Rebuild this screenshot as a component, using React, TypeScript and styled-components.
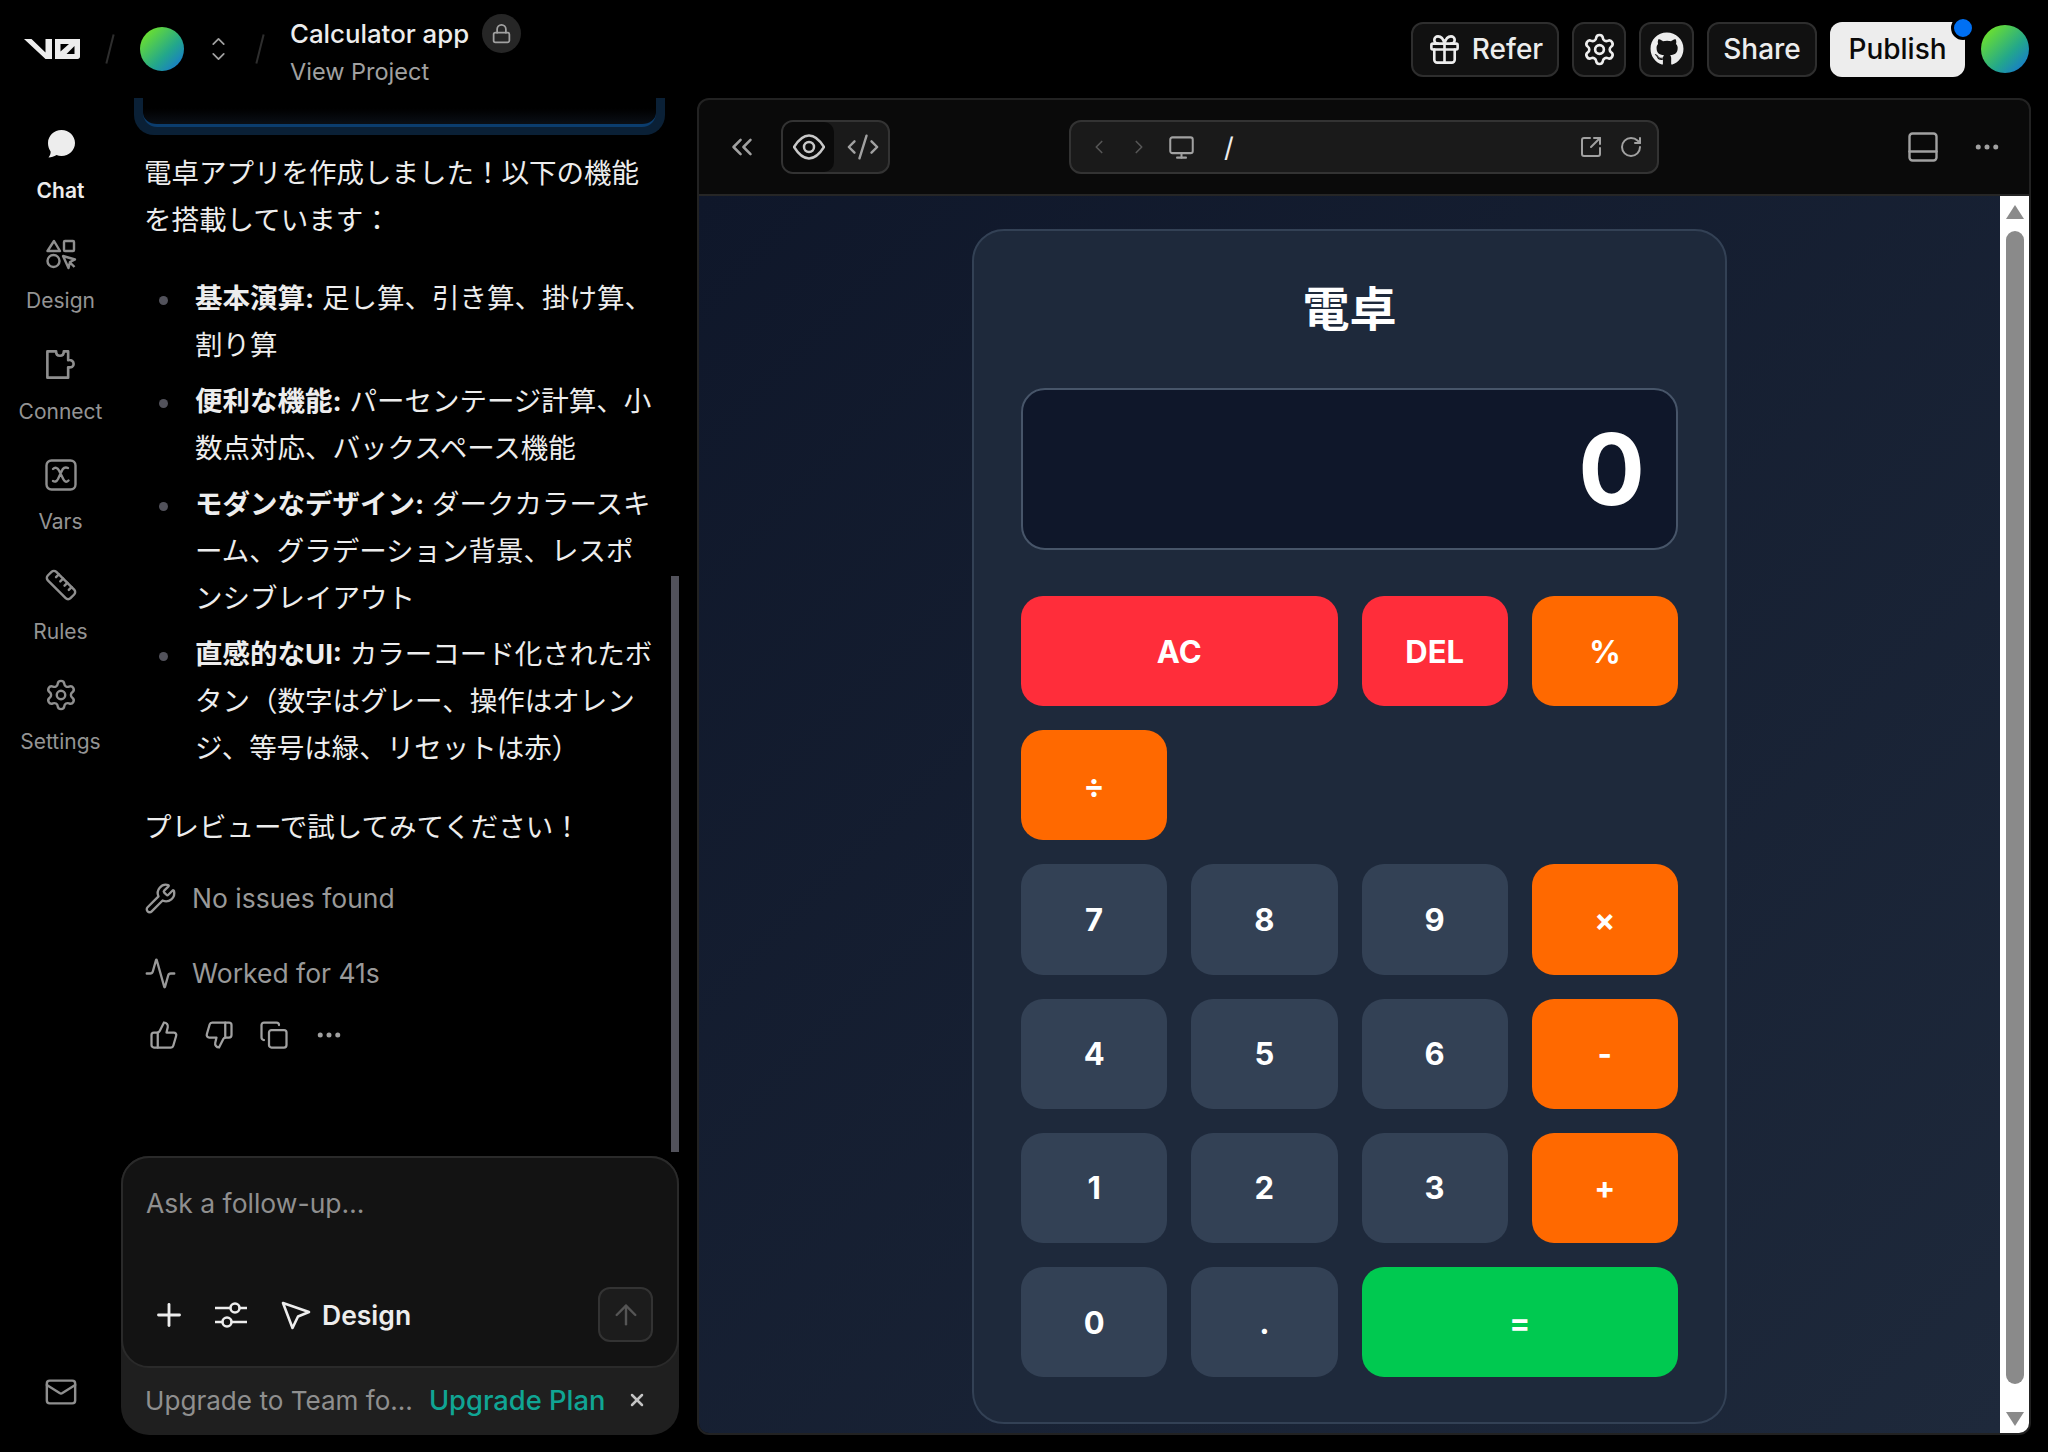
import React from 'react';
import styled, { createGlobalStyle } from 'styled-components';
import {
  Activity,
  ArrowUp,
  ChevronDown,
  ChevronLeft,
  ChevronRight,
  ChevronsLeft,
  ChevronUp,
  CodeXml,
  Copy,
  Ellipsis,
  Gift,
  Lock,
  Mail,
  Monitor,
  PanelBottom,
  Plus,
  RotateCw,
  Ruler,
  Settings,
  SquareArrowOutUpRight,
  ThumbsDown,
  ThumbsUp,
  Wrench,
  X,
} from 'lucide-react';
import { FaGithub } from 'react-icons/fa';

const SANS = `Inter, "Noto Sans CJK JP", sans-serif`;

const GlobalStyle = createGlobalStyle`
  html, body {
    margin: 0;
    padding: 0;
    background: #000;
  }
  * {
    box-sizing: border-box;
  }
`;

const Root = styled.div`
  width: 2048px;
  height: 1452px;
  display: flex;
  flex-direction: column;
  background: #000;
  color: #ededed;
  font-family: ${SANS};
  overflow: hidden;
`;

const Header = styled.header`
  height: 98px;
  flex: none;
  display: flex;
  align-items: center;
  padding: 0 19px 0 24px;
`;

const Slash = styled.span<{ $gap: number }>`
  width: 2px;
  height: 30px;
  margin: 0 ${(p) => p.$gap}px;
  background: #2e2e2e;
  transform: rotate(14deg);
`;

const Avatar = styled.div<{ $size: number }>`
  width: ${(p) => p.$size}px;
  height: ${(p) => p.$size}px;
  flex: none;
  border-radius: 50%;
  background: linear-gradient(135deg, #6fe32a 10%, #23a78b 60%, #1574d6 95%);
`;

const Switcher = styled.div`
  width: 20px;
  margin-left: 24px;
  display: flex;
  flex-direction: column;
  align-items: center;
  color: #a1a1a1;
  svg {
    margin: -3px 0;
  }
`;

const ProjectBlock = styled.div`
  display: flex;
  flex-direction: column;
  gap: 3px;
  margin-left: -2px;
  margin-top: 1px;
`;

const ProjectRow = styled.div`
  display: flex;
  align-items: center;
  gap: 13px;
  height: 40px;
`;

const ProjectName = styled.span`
  font-size: 25.8px;
  font-weight: 500;
  color: #ededed;
`;

const LockBadge = styled.span`
  width: 39px;
  height: 39px;
  border-radius: 50%;
  background: #262626;
  color: #a1a1a1;
  display: flex;
  align-items: center;
  justify-content: center;
`;

const ProjectLink = styled.span`
  font-size: 23.5px;
  color: #a1a1a1;
`;

const HeaderActions = styled.div`
  margin-left: auto;
  display: flex;
  align-items: center;
  gap: 13px;
`;

const HeaderButton = styled.button<{ $width: number }>`
  width: ${(p) => p.$width}px;
  height: 55px;
  display: flex;
  align-items: center;
  justify-content: center;
  gap: 10px;
  border-radius: 12px;
  border: 2px solid #2e2e2e;
  background: #111;
  color: #ededed;
  font: 500 28px ${SANS};
  padding: 0;
`;

const PublishButton = styled.button`
  position: relative;
  width: 135px;
  height: 55px;
  margin-right: 3px;
  border: 0;
  border-radius: 12px;
  background: #ededed;
  color: #0a0a0a;
  font: 500 28px ${SANS};
  padding: 0;
`;

const NotifyDot = styled.span`
  position: absolute;
  top: -6px;
  right: -10px;
  width: 24px;
  height: 24px;
  border-radius: 50%;
  background: #0070f3;
  border: 3px solid #000;
`;

const Body = styled.div`
  flex: 1;
  min-height: 0;
  display: flex;
  padding-bottom: 17px;
  padding-right: 17px;
`;

const Rail = styled.nav`
  width: 121px;
  flex: none;
  display: flex;
  flex-direction: column;
  align-items: center;
  padding-top: 27px;
`;

const RailItem = styled.div<{ $active?: boolean }>`
  height: 110.3px;
  width: 100%;
  display: flex;
  flex-direction: column;
  align-items: center;
  gap: 15px;
  font-size: 21px;
  font-weight: ${(p) => (p.$active ? 600 : 400)};
  color: ${(p) => (p.$active ? '#ededed' : '#949494')};
`;

const RailIcon = styled.span<{ $active?: boolean }>`
  height: 38px;
  display: flex;
  align-items: center;
  justify-content: center;
  color: ${(p) => (p.$active ? '#ededed' : '#8f8f8f')};
`;

const RailMail = styled.div`
  margin-top: auto;
  margin-bottom: 26px;
  color: #8f8f8f;
  display: flex;
`;

const ChatColumn = styled.section`
  width: 558px;
  flex: none;
  display: flex;
  flex-direction: column;
`;

const ChatScroll = styled.div`
  position: relative;
  flex: 1;
  min-height: 0;
  overflow: hidden;
  padding: 0 23px;
`;

const ChatScrollThumb = styled.span`
  position: absolute;
  right: 0;
  top: 478px;
  width: 8px;
  height: 576px;
  background: #52525b;
`;

const PrevCard = styled.div`
  height: 37px;
  margin: 0 -9px 0 -10px;
  padding: 0 9px 8px;
  border-radius: 0 0 20px 20px;
  background: #0a2036;
`;

const PrevCardInner = styled.div`
  height: 100%;
  border-radius: 0 0 14px 14px;
  border-bottom: 3px solid #0b3d6e;
  background: linear-gradient(#000 40%, #0a0f16);
`;

const Paragraph = styled.p<{ $top: number }>`
  margin: ${(p) => p.$top}px 0 0;
  font-size: 27.5px;
  line-height: 47px;
  color: #ededed;
`;

const FeatureList = styled.ul`
  list-style: none;
  margin: 31px 0 0;
  padding: 0 0 0 51px;
  display: flex;
  flex-direction: column;
  gap: 9px;
`;

const FeatureItem = styled.li`
  position: relative;
  font-size: 27.5px;
  line-height: 47px;
  color: #ededed;
  &::before {
    content: '';
    position: absolute;
    left: -36px;
    top: 21px;
    width: 9px;
    height: 9px;
    border-radius: 50%;
    background: #52525b;
  }
  b {
    font-weight: 700;
  }
`;

const StatusRow = styled.div<{ $top: number }>`
  display: flex;
  align-items: center;
  gap: 15px;
  margin-top: ${(p) => p.$top}px;
  height: 40px;
  color: #999;
  font-size: 26.5px;
`;

const ActionRow = styled.div`
  display: flex;
  align-items: center;
  gap: 25px;
  margin-top: 27px;
  padding-left: 5px;
  color: #a1a1a1;
`;

const InputDock = styled.div`
  flex: none;
  height: 279px;
  display: flex;
  flex-direction: column;
  background: #1f1f1f;
  border-radius: 28px;
`;

const InputBox = styled.div`
  height: 212px;
  flex: none;
  display: flex;
  flex-direction: column;
  background: #131313;
  border: 2px solid #2a2a2a;
  border-radius: 28px;
  padding: 27px 24px 24px 23px;
`;

const Placeholder = styled.div`
  font-size: 26.5px;
  line-height: 36px;
  color: #8f8f8f;
`;

const InputTools = styled.div`
  margin-top: auto;
  display: flex;
  align-items: center;
  color: #ededed;
  padding-left: 5px;
`;

const ToolSlot = styled.span<{ $left: number }>`
  display: flex;
  margin-left: ${(p) => p.$left}px;
`;

const DesignLabel = styled.span`
  font-size: 26.5px;
  font-weight: 600;
  margin-left: 11px;
`;

const SendButton = styled.button`
  margin-left: auto;
  width: 55px;
  height: 55px;
  border-radius: 12px;
  border: 2px solid #333;
  background: #1c1c1c;
  color: #555;
  padding: 0;
  display: flex;
  align-items: center;
  justify-content: center;
`;

const UpgradeBar = styled.div`
  flex: 1;
  display: flex;
  align-items: center;
  padding: 0 32px 3px 24px;
  font-size: 26.1px;
  color: #8f8f8f;
`;

const UpgradeLink = styled.span`
  margin-left: 16px;
  font-size: 27.3px;
  color: #10a594;
  font-weight: 500;
`;

const UpgradeClose = styled.span`
  margin-left: auto;
  display: flex;
  color: #c4c4c4;
`;

const Preview = styled.section`
  flex: 1;
  min-width: 0;
  margin-left: 18px;
  display: flex;
  flex-direction: column;
  border: 2px solid #222;
  border-radius: 12px;
  overflow: hidden;
  background: #0a0a0a;
`;

const Toolbar = styled.div`
  height: 96px;
  flex: none;
  display: flex;
  align-items: center;
  border-bottom: 2px solid #262626;
  padding: 0 27px 0 26px;
  color: #a1a1a1;
`;

const ViewToggle = styled.div`
  display: flex;
  margin-left: 22px;
  width: 109px;
  height: 54px;
  border: 2px solid #333;
  border-radius: 12px;
  background: #1a1a1a;
`;

const ViewTab = styled.span<{ $active?: boolean }>`
  flex: ${(p) => (p.$active ? '0 0 51px' : 1)};
  display: flex;
  align-items: center;
  justify-content: center;
  padding-left: ${(p) => (p.$active ? 0 : 3)}px;
  border-radius: 10px;
  background: ${(p) => (p.$active ? '#0a0a0a' : 'transparent')};
  color: ${(p) => (p.$active ? '#c8c8c8' : '#a1a1a1')};
`;

const AddressBar = styled.div`
  margin-left: 179px;
  width: 590px;
  height: 54px;
  display: flex;
  align-items: center;
  padding: 0 14px 0 17px;
  border: 2px solid #333;
  border-radius: 12px;
  background: #1a1a1a;
`;

const NavArrow = styled.span`
  display: flex;
  color: #555;
  margin-right: 18px;
`;

const AddressPath = styled.span`
  margin-left: 29px;
  font-size: 27px;
  color: #ededed;
`;

const AddressTools = styled.div`
  margin-left: auto;
  display: flex;
  align-items: center;
  gap: 16px;
`;

const ToolbarEnd = styled.div`
  margin-left: auto;
  display: flex;
  align-items: center;
  gap: 31px;
`;

const PreviewBody = styled.div`
  flex: 1;
  min-height: 0;
  display: flex;
`;

const Canvas = styled.main`
  flex: 1;
  min-width: 0;
  display: flex;
  justify-content: center;
  padding-top: 33px;
  background: linear-gradient(135deg, #0f172a, #1e293b);
`;

const CalculatorCard = styled.div`
  width: 755px;
  height: 1195px;
  padding: 47px;
  background: #1e293b;
  border: 2px solid #334155;
  border-radius: 32px;
`;

const CalculatorTitle = styled.h1`
  margin: 0 0 48px;
  height: 62px;
  line-height: 62px;
  text-align: center;
  font-size: 47px;
  font-weight: 700;
  color: #fff;
`;

const Display = styled.div`
  height: 162px;
  margin-bottom: 46px;
  display: flex;
  align-items: center;
  justify-content: flex-end;
  padding-right: 31px;
  background: #0f172a;
  border: 2px solid #475569;
  border-radius: 24px;
  color: #fff;
  font-size: 99px;
  font-weight: 700;
`;

const Keypad = styled.div`
  display: grid;
  grid-template-columns: repeat(4, 1fr);
  grid-auto-rows: 110.2px;
  gap: 24px;
`;

const KEY_COLOURS = {
  number: '#334155',
  operator: '#ff6900',
  clear: '#ff2d3a',
  equals: '#00c950',
};

type KeyTone = keyof typeof KEY_COLOURS;

const Key = styled.button<{ $tone: KeyTone; $wide?: boolean; $newRow?: boolean }>`
  grid-column: ${(p) => (p.$wide ? 'span 2' : p.$newRow ? '1' : 'auto')};
  border: 0;
  padding: 0;
  border-radius: 22px;
  background: ${(p) => KEY_COLOURS[p.$tone]};
  color: #fff;
  font: 700 31px ${SANS};
`;

const Scrollbar = styled.div`
  width: 29px;
  flex: none;
  display: flex;
  flex-direction: column;
  align-items: center;
  background: #fff;
  padding: 9px 0 7px;
`;

const ScrollThumb = styled.span`
  flex: 1;
  width: 18px;
  margin: 12px 0 28px;
  border-radius: 9px;
  background: #8a8a8a;
`;

const ScrollArrow = styled.span<{ $down?: boolean }>`
  width: 0;
  height: 0;
  border-left: 9px solid transparent;
  border-right: 9px solid transparent;
  ${(p) => (p.$down ? 'border-top: 14px solid #8a8a8a;' : 'border-bottom: 14px solid #8a8a8a;')}
`;

const V0Logo = () => (
  <svg width="56" height="26" viewBox="0 0 56 26" fill="#ededed">
    <path d="M0 3h7.500l14 13.500V3H28v20h-6.500L0 3z" />
    <path d="M31 3h25v17.500c0 1.500-1 2.500-2.500 2.500H31V3zm5.500 5v7.500L45 8h-8.500zM50.500 10l-8 8h8v-8z" fillRule="evenodd" />
  </svg>
);

const ChatIcon = () => (
  <svg width="30" height="30" viewBox="0 0 30 30" fill="#ededed">
    <path d="M15.500 1C23 1 29 6.800 29 14s-6 13-13.500 13c-1.800 0-3.400-.3-5-.9C8 27.500 5.500 28.500 2.500 28.500c1.600-2 2.300-3.900 2.100-6C2.900 20 2 17.200 2 14 2 6.800 8 1 15.500 1z" />
  </svg>
);

const DesignIcon = () => (
  <svg width="32" height="32" viewBox="0 0 32 32" fill="none" stroke="currentColor" strokeWidth="2.400" strokeLinejoin="round">
    <path d="M9 3l6 10H2.500L9 3z" />
    <rect x="19" y="3" width="10" height="10" rx="1" />
    <circle cx="8.500" cy="23" r="6" />
    <path d="M18 18l12 3.500-5 2.500-1.500 6L18 18zM25 24.500l4.500 4.500" />
  </svg>
);

const ConnectIcon = () => (
  <svg width="35" height="35" viewBox="-2 1 32 32" fill="none" stroke="currentColor" strokeWidth="2.400" strokeLinejoin="round">
    <path d="M2 5h8c0 3 1 4 3.500 4S17 8 17 5h4v8c3-.5 5 1 5 3.500S24 20 21 19.500V29H2V5z" />
  </svg>
);

const VarsIcon = () => (
  <svg width="32" height="32" viewBox="0 0 32 32" fill="none" stroke="currentColor" strokeWidth="2.400" strokeLinecap="round">
    <rect x="1.500" y="1.500" width="29" height="29" rx="5" />
    <path d="M8 10c2-2 4.500-1.500 6 1.500l4.500 9c1.500 3 3.500 2.500 5 1M23 9c-3-1.500-5 0-6.500 3.500L13 20c-1.500 3-3.500 3-5 2" />
  </svg>
);

const SlidersIcon = () => (
  <svg width="34" height="30" viewBox="0 0 34 30" fill="none" stroke="currentColor" strokeWidth="2.600">
    <path d="M1 8h15M26 8h7M1 22h7M18 22h15" />
    <circle cx="21" cy="8" r="4.500" />
    <circle cx="13" cy="22" r="4.500" />
  </svg>
);

const PointerIcon = () => (
  <svg width="30" height="30" viewBox="0 0 30 30" fill="none" stroke="currentColor" strokeWidth="2.600" strokeLinejoin="round">
    <path d="M2 3l26 9-11 4.500L11.500 28 2 3z" />
  </svg>
);

const DiamondEye = () => (
  <svg width="32" height="32" viewBox="0 0 32 32" fill="none" stroke="currentColor" strokeWidth="2.500" strokeLinejoin="round">
    <path d="M1 16C6 8 10 4.500 16 4.500S26 8 31 16c-5 8-9 11.500-15 11.500S6 24 1 16z" />
    <circle cx="16" cy="16" r="5" />
  </svg>
);

const RAIL_ITEMS = [
  { label: 'Chat', icon: <ChatIcon />, active: true },
  { label: 'Design', icon: <DesignIcon /> },
  { label: 'Connect', icon: <ConnectIcon /> },
  { label: 'Vars', icon: <VarsIcon /> },
  { label: 'Rules', icon: <Ruler size={34} strokeWidth={1.7} /> },
  { label: 'Settings', icon: <Settings size={34} strokeWidth={1.7} /> },
];

const FEATURES = [
  { title: '基本演算', text: '足し算、引き算、掛け算、割り算' },
  { title: '便利な機能', text: 'パーセンテージ計算、小数点対応、バックスペース機能' },
  { title: 'モダンなデザイン', text: 'ダークカラースキーム、グラデーション背景、レスポンシブレイアウト' },
  { title: '直感的なUI', text: 'カラーコード化されたボタン（数字はグレー、操作はオレンジ、等号は緑、リセットは赤）' },
];

type KeyDef = { label: string; tone: KeyTone; wide?: boolean; newRow?: boolean };

const KEYS: KeyDef[] = [
  { label: 'AC', tone: 'clear', wide: true },
  { label: 'DEL', tone: 'clear' },
  { label: '%', tone: 'operator' },
  { label: '÷', tone: 'operator' },
  { label: '7', tone: 'number', newRow: true },
  { label: '8', tone: 'number' },
  { label: '9', tone: 'number' },
  { label: '×', tone: 'operator' },
  { label: '4', tone: 'number' },
  { label: '5', tone: 'number' },
  { label: '6', tone: 'number' },
  { label: '-', tone: 'operator' },
  { label: '1', tone: 'number' },
  { label: '2', tone: 'number' },
  { label: '3', tone: 'number' },
  { label: '+', tone: 'operator' },
  { label: '0', tone: 'number' },
  { label: '.', tone: 'number' },
  { label: '=', tone: 'equals', wide: true },
];

export default function App() {
  return (
    <Root>
      <GlobalStyle />
      <Header>
        <V0Logo />
        <Slash $gap={29} />
        <Avatar $size={44} />
        <Switcher>
          <ChevronUp size={21} />
          <ChevronDown size={21} />
        </Switcher>
        <Slash $gap={31} />
        <ProjectBlock>
          <ProjectRow>
            <ProjectName>Calculator app</ProjectName>
            <LockBadge>
              <Lock size={21} />
            </LockBadge>
          </ProjectRow>
          <ProjectLink>View Project</ProjectLink>
        </ProjectBlock>
        <HeaderActions>
          <HeaderButton $width={148}>
            <Gift size={35} strokeWidth={1.8} />
            Refer
          </HeaderButton>
          <HeaderButton $width={54}>
            <Settings size={35} strokeWidth={1.8} />
          </HeaderButton>
          <HeaderButton $width={55}>
            <FaGithub size={34} />
          </HeaderButton>
          <HeaderButton $width={110}>Share</HeaderButton>
          <PublishButton>
            Publish
            <NotifyDot />
          </PublishButton>
          <Avatar $size={48} />
        </HeaderActions>
      </Header>
      <Body>
        <Rail>
          {RAIL_ITEMS.map((item) => (
            <RailItem key={item.label} $active={item.active}>
              <RailIcon $active={item.active}>{item.icon}</RailIcon>
              {item.label}
            </RailItem>
          ))}
          <RailMail>
            <Mail size={34} strokeWidth={1.7} />
          </RailMail>
        </Rail>
        <ChatColumn>
          <ChatScroll>
            <PrevCard>
              <PrevCardInner />
            </PrevCard>
            <Paragraph $top={15}>電卓アプリを作成しました！以下の機能を搭載しています：</Paragraph>
            <FeatureList>
              {FEATURES.map((f) => (
                <FeatureItem key={f.title}>
                  <b>{f.title}:</b> {f.text}
                </FeatureItem>
              ))}
            </FeatureList>
            <Paragraph $top={32}>プレビューで試してみてください！</Paragraph>
            <StatusRow $top={27}>
              <Wrench size={33} strokeWidth={1.7} />
              No issues found
            </StatusRow>
            <StatusRow $top={35}>
              <Activity size={33} strokeWidth={1.7} />
              Worked for 41s
            </StatusRow>
            <ActionRow>
              <ThumbsUp size={30} strokeWidth={1.8} />
              <ThumbsDown size={30} strokeWidth={1.8} />
              <Copy size={30} strokeWidth={1.8} />
              <Ellipsis size={30} strokeWidth={2} />
            </ActionRow>
            <ChatScrollThumb />
          </ChatScroll>
          <InputDock>
            <InputBox>
              <Placeholder>Ask a follow-up…</Placeholder>
              <InputTools>
                <Plus size={36} strokeWidth={1.9} />
                <ToolSlot $left={27}>
                  <SlidersIcon />
                </ToolSlot>
                <ToolSlot $left={33}>
                  <PointerIcon />
                </ToolSlot>
                <DesignLabel>Design</DesignLabel>
                <SendButton>
                  <ArrowUp size={32} strokeWidth={1.8} />
                </SendButton>
              </InputTools>
            </InputBox>
            <UpgradeBar>
              Upgrade to Team fo…
              <UpgradeLink>Upgrade Plan</UpgradeLink>
              <UpgradeClose>
                <X size={20} strokeWidth={3} />
              </UpgradeClose>
            </UpgradeBar>
          </InputDock>
        </ChatColumn>
        <Preview>
          <Toolbar>
            <ChevronsLeft size={34} strokeWidth={1.8} />
            <ViewToggle>
              <ViewTab $active>
                <DiamondEye />
              </ViewTab>
              <ViewTab>
                <CodeXml size={34} strokeWidth={1.7} />
              </ViewTab>
            </ViewToggle>
            <AddressBar>
              <NavArrow>
                <ChevronLeft size={22} strokeWidth={1.8} />
              </NavArrow>
              <NavArrow>
                <ChevronRight size={22} strokeWidth={1.8} />
              </NavArrow>
              <Monitor size={27} strokeWidth={1.8} />
              <AddressPath>/</AddressPath>
              <AddressTools>
                <SquareArrowOutUpRight size={24} strokeWidth={2} />
                <RotateCw size={24} strokeWidth={2} />
              </AddressTools>
            </AddressBar>
            <ToolbarEnd>
              <PanelBottom size={36} strokeWidth={1.6} />
              <Ellipsis size={30} strokeWidth={2} />
            </ToolbarEnd>
          </Toolbar>
          <PreviewBody>
            <Canvas>
              <CalculatorCard>
                <CalculatorTitle>電卓</CalculatorTitle>
                <Display>0</Display>
                <Keypad>
                  {KEYS.map((k) => (
                    <Key key={k.label} $tone={k.tone} $wide={k.wide} $newRow={k.newRow}>
                      {k.label}
                    </Key>
                  ))}
                </Keypad>
              </CalculatorCard>
            </Canvas>
            <Scrollbar>
              <ScrollArrow />
              <ScrollThumb />
              <ScrollArrow $down />
            </Scrollbar>
          </PreviewBody>
        </Preview>
      </Body>
    </Root>
  );
}
